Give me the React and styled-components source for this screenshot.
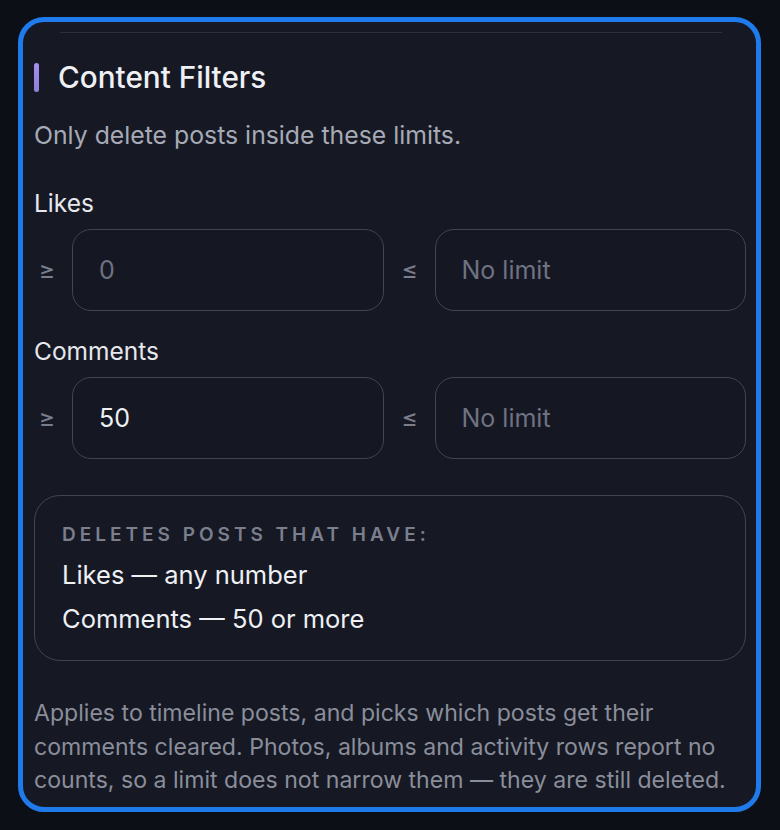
import React from "react";
import styled, { createGlobalStyle } from "styled-components";

const Global = createGlobalStyle`
  html, body { margin: 0; padding: 0; background: #0d0f16; }
  body { font-family: Inter, "Noto Sans", "Liberation Sans", sans-serif; -webkit-font-smoothing: antialiased; }
  * { box-sizing: border-box; }
`;

const Page = styled.div`
  padding: 17px 19px 0 18px;
  height: 830px;
`;

const Card = styled.section`
  height: 795px;
  border: 5px solid #1f7bec;
  border-radius: 26px;
  background: #161924;
  padding: 10px 10px 0 11px;
  display: flex;
  flex-direction: column;
  overflow: hidden;
`;

const Divider = styled.div`
  height: 1px;
  background: #2d303b;
  margin: 0 24px 0 26px;
`;

const TitleRow = styled.div`
  display: flex;
  align-items: center;
  gap: 19px;
  margin-top: 27px;
  height: 34px;
`;

const Accent = styled.span`
  width: 5px;
  height: 29px;
  border-radius: 3px;
  background: linear-gradient(180deg, #a58ff0, #8e7fd8);
`;

const Title = styled.h2`
  margin: 0;
  font-size: 29.7px;
  font-weight: 500;
  line-height: 34px;
  color: #eef0f5;
`;

const Subtitle = styled.p`
  margin: 27px 0 0;
  font-size: 24.8px;
  line-height: 28px;
  color: #a6aab7;
`;

const FieldLabel = styled.div`
  margin-top: ${(p) => p.$top}px;
  font-size: 24.5px;
  line-height: 28px;
  color: #e7e8ed;
`;

const RangeRow = styled.div`
  margin-top: 12px;
  display: grid;
  grid-template-columns: minmax(0, 1fr) minmax(0, 1fr);
  gap: 13px;
`;

const Bound = styled.div`
  display: flex;
  align-items: center;
  gap: 12px;
`;

const Sym = styled.span`
  flex: 0 0 26px;
  text-align: center;
  font-size: 25px;
  color: #7a7e8c;
`;

const Input = styled.input`
  flex: 1;
  min-width: 0;
  width: 100%;
  height: 82px;
  border: 1.5px solid #424551;
  border-radius: 19px;
  background: #151823;
  padding: 0 26px;
  font-family: inherit;
  font-size: 25px;
  color: ${(p) => (p.$muted ? "#6e7281" : "#eef0f4")};
  outline: none;
  &::placeholder { color: #6e7281; }
`;

const Summary = styled.div`
  margin-top: 36px;
  height: 166px;
  border: 1.5px solid #424551;
  border-radius: 26px;
  padding: 27px 27px 0;
  display: flex;
  flex-direction: column;
  gap: 12px;
`;

const SummaryHead = styled.div`
  font-size: 19px;
  line-height: 24px;
  font-weight: 600;
  letter-spacing: 4px;
  color: #7a7e8d;
  text-transform: uppercase;
`;

const SummaryLine = styled.div`
  font-size: 25.5px;
  line-height: 32px;
  color: #eef0f4;
`;

const Note = styled.p`
  margin: 36px 0 0;
  font-size: 23.1px;
  line-height: 33.5px;
  color: #8a8e9b;
`;

function Range({ min, max }) {
  return (
    <RangeRow>
      <Bound>
        <Sym>≥</Sym>
        <Input defaultValue={min} $muted={min === "0"} readOnly />
      </Bound>
      <Bound>
        <Sym>≤</Sym>
        <Input placeholder={max} readOnly />
      </Bound>
    </RangeRow>
  );
}

export default function App() {
  return (
    <>
      <Global />
      <Page>
        <Card>
          <Divider />
          <TitleRow>
            <Accent />
            <Title>Content Filters</Title>
          </TitleRow>
          <Subtitle>Only delete posts inside these limits.</Subtitle>
          <FieldLabel $top={40}>Likes</FieldLabel>
          <Range min="0" max="No limit" />
          <FieldLabel $top={26}>Comments</FieldLabel>
          <Range min="50" max="No limit" />
          <Summary>
            <SummaryHead>Deletes posts that have:</SummaryHead>
            <SummaryLine>Likes — any number</SummaryLine>
            <SummaryLine>Comments — 50 or more</SummaryLine>
          </Summary>
          <Note>
            Applies to timeline posts, and picks which posts get their comments cleared. Photos,
            albums and activity rows report no counts, so a limit does not narrow them — they are
            still deleted.
          </Note>
        </Card>
      </Page>
    </>
  );
}
